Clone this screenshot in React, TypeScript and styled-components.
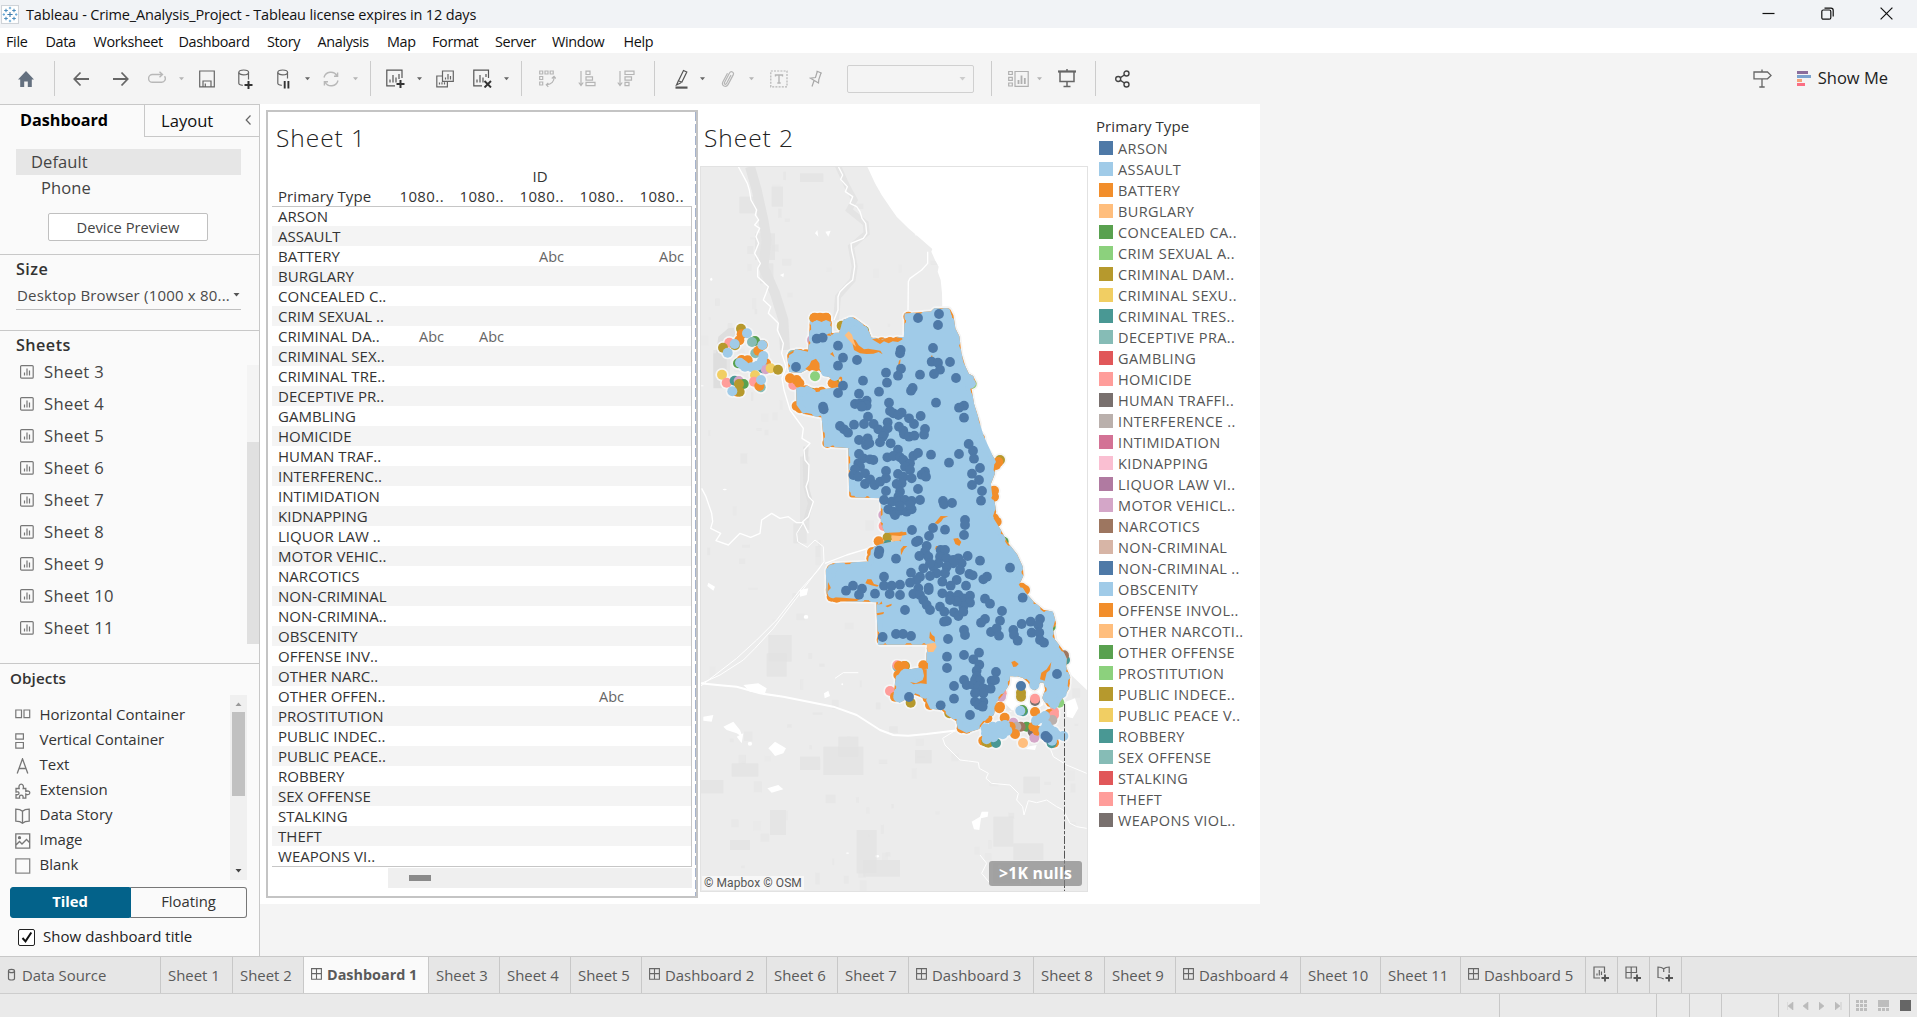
import React from 'react';
import styled, { createGlobalStyle } from 'styled-components';

const Global = createGlobalStyle`
  * { box-sizing: border-box; }
  body { margin: 0; overflow: hidden; font-family: "Open Sans", "Noto Sans", sans-serif; color: #333; }
  svg { display: block; flex: none; }
`;

/* ---------- window frame ---------- */
const Window = styled.div`
  width: 1917px; height: 1017px; display: flex; flex-direction: column; background: #f4f4f4;
`;
const TitleBar = styled.header`
  height: 28px; flex: none; display: flex; align-items: center; background: #f1f3f6; padding-left: 1px;
`;
const TitleText = styled.span`
  margin-left: 7px; font-size: 14.5px; letter-spacing: -0.16px; color: #111; white-space: pre; flex: 1; line-height: 27px;
`;
const WindowButtons = styled.div`
  display: flex; gap: 46px; align-items: center; margin-right: 24px; margin-bottom: 2px;
`;
const MenuBar = styled.nav`
  height: 25px; flex: none; display: flex; background: #fff; padding-left: 6px;
`;
const MenuItem = styled.span<{ $w: number }>`
  width: ${p => p.$w}px; font-size: 14.4px; letter-spacing: -0.34px; line-height: 27px; color: #111; white-space: nowrap;
`;
const Toolbar = styled.div`
  height: 51px; flex: none; display: flex; align-items: center; background: #f4f4f4;
`;
const Slot = styled.span<{ $gap: number; $w: number }>`
  margin-left: ${p => p.$gap}px; width: ${p => p.$w}px; height: 22px; display: flex; align-items: center; justify-content: center; flex: none;
`;
const Divider = styled.span<{ $gap: number }>`
  margin-left: ${p => p.$gap}px; width: 1px; height: 35px; background: #ccc; flex: none;
`;
const Select = styled.span`
  margin-left: 25px; width: 127px; height: 28px; border: 1px solid #d0d0d0; border-radius: 2px; flex: none;
  display: flex; align-items: center; justify-content: flex-end; padding-right: 7px;
`;
const ShowMe = styled.span`
  display: flex; align-items: center; gap: 6px; margin: 0 29px 0 25px; font-size: 16.5px; color: #222; white-space: nowrap; line-height: 20px; padding-bottom: 2px;
  svg { margin-top: 2px; }
`;
const Spacer = styled.span`flex: 1;`;

const Workspace = styled.main`
  height: 852px; flex: none; display: flex;
`;

/* ---------- side panel ---------- */
const Side = styled.aside`
  width: 260px; flex: none; display: flex; flex-direction: column; background: #fafafa;
  border-top: 1px solid #c8c8c8; border-right: 1px solid #c8c8c8;
`;
const SideTabs = styled.div`height: 32px; display: flex; flex: none;`;
const ActiveSideTab = styled.div`
  width: 144px; padding-left: 20px; font-weight: 700; font-size: 16.2px; line-height: 31px; color: #000;
`;
const SideTab = styled.div`
  flex: 1; display: flex; border-left: 1px solid #c8c8c8; border-bottom: 1px solid #c8c8c8;
  padding: 0 7px 0 16px; font-size: 16.6px; line-height: 31px; color: #111; justify-content: space-between;
  svg { margin-top: 9px; }
`;
const Devices = styled.section`
  height: 118px; flex: none; border-bottom: 1px solid #c8c8c8; display: flex; flex-direction: column; padding: 12px 0 0 16px;
`;
const Device = styled.div<{ $on?: boolean }>`
  width: 225px; height: 26px; line-height: 26px; font-size: 16.5px; color: #444; letter-spacing: 0.1px;
  padding-left: ${p => (p.$on ? 15 : 25)}px; background: ${p => (p.$on ? '#e6e6e6' : 'transparent')};
`;
const PreviewButton = styled.button`
  margin: 12px 0 0 32px; width: 160px; height: 28px; padding: 0; border: 1px solid #c0c0c0; border-radius: 2px; background: #fff;
  font: 400 14.7px/26px "Open Sans", sans-serif; color: #444;
`;
const SizeSection = styled.section`
  height: 76px; flex: none; border-bottom: 1px solid #c8c8c8; padding: 1px 18px 0 16px;
`;
const Heading = styled.h3`
  margin: 0; font-size: 16.2px; line-height: 26px; font-weight: 600; color: #333; letter-spacing: 0.45px;
`;
const SizePicker = styled.div`
  height: 28px; display: flex; align-items: center; justify-content: space-between; border-bottom: 1px solid #c0c0c0;
  font-size: 15px; color: #4a4a4a; white-space: nowrap; padding: 0 1px 2px; letter-spacing: 0.2px;
`;
const SheetsSection = styled.section`
  height: 333px; flex: none; border-bottom: 1px solid #c8c8c8; display: flex; flex-direction: column; padding: 1px 0 0 16px;
`;
const ListRow = styled.div`display: flex; flex: 1; justify-content: space-between;`;
const SheetList = styled.div`display: flex; flex-direction: column; margin-top: -3px;`;
const SheetItem = styled.div`
  height: 32px; display: flex; align-items: center; gap: 10px; padding-left: 4px; font-size: 16.6px; letter-spacing: 0.35px; color: #444;
  svg { margin-top: 1px; }
`;
const SheetScroll = styled.div`
  width: 12px; height: 279px; margin-top: 7px; padding-top: 77px; background: #f4f4f4;
  &::after { content: ""; display: block; height: 202px; background: #e0e0e0; }
`;
const ObjectsSection = styled.section`flex: 1; display: flex; flex-direction: column; padding: 1px 12px 0 10px;`;
const ObjectsHeading = styled.h3`margin: 0; font-size: 15.2px; line-height: 27px; font-weight: 600; color: #333; letter-spacing: 0.1px;`;
const ObjectList = styled.div`display: flex; flex-direction: column; padding-top: 6px;`;
const ObjectItem = styled.div`
  height: 25px; display: grid; grid-template-columns: 24.5px auto; align-items: center; padding-left: 5px;
  font-size: 15px; color: #333; white-space: nowrap; svg { margin-top: 4px; }
`;
const ObjectRow = styled.div`display: flex; justify-content: space-between; height: 187px; margin-top: 3px;`;
const ObjectScroll = styled.div`
  width: 17px; height: 185px; background: #f0f0f0; display: flex; flex-direction: column; align-items: center; padding: 7px 0;
`;
const ObjectThumb = styled.div`width: 13px; height: 84px; background: #c1c1c1; margin: 6px 0 73px; flex: none;`;
const Segmented = styled.div`display: flex; height: 31px; margin-top: 5px; flex: none;`;
const Segment = styled.div<{ $on?: boolean }>`
  width: ${p => (p.$on ? 120 : 117)}px; border: 1px solid ${p => (p.$on ? '#03628a' : '#777')}; border-left-color: #03628a;
  border-radius: ${p => (p.$on ? '3px 0 0 3px' : '0 3px 3px 0')}; background: ${p => (p.$on ? '#03628a' : '#fafafa')};
  color: ${p => (p.$on ? '#fff' : '#333')}; font-weight: ${p => (p.$on ? 700 : 400)}; font-size: 14.8px; line-height: 27px; text-align: center;
`;
const CheckRow = styled.label`display: flex; align-items: center; gap: 8px; margin: 8px 0 0 8px; font-size: 15px; color: #222; line-height: 20px; letter-spacing: 0.05px;`;
const CheckBox = styled.span`
  width: 17px; height: 17px; margin-top: 2px; border: 1.5px solid #222; border-radius: 2px; background: #fff; display: flex; align-items: center; justify-content: center;
`;

/* ---------- dashboard canvas ---------- */
const Canvas = styled.div`width: 1000px; height: 800px; background: #fff; display: flex; flex: none; padding: 6px 0 0 6px;`;
const SheetFrame = styled.section`
  width: 432px; height: 788px; flex: none; border: 2px solid #c4c4c4; padding: 0 3px 0 4px; display: flex; flex-direction: column;
  background: linear-gradient(#fff, #fff) 0 0 / 427px 100% no-repeat, repeating-linear-gradient(#a5b3cd 0 9px, #fff 9px 12px);
`;
const SheetTitle = styled.h2`
  margin: 0; font-weight: 300; font-size: 24.5px; letter-spacing: 0.95px; line-height: 36px; color: #222; white-space: nowrap;
`;
const FrameTitle = styled(SheetTitle)`padding: 8px 0 0 4px; height: 54px; flex: none;`;
const FieldName = styled.div`
  height: 20px; padding-left: 114px; width: 422px; text-align: center; font-size: 15px; line-height: 20px; color: #333; flex: none;
`;
const HeaderRow = styled.div`
  display: grid; grid-template-columns: 116px repeat(5, 60px); height: 20px; font-size: 15px; line-height: 20px; color: #333; flex: none; white-space: nowrap;
`;
const HeaderCell = styled.span<{ $first?: boolean }>`
  text-align: ${p => (p.$first ? 'left' : 'right')}; padding: ${p => (p.$first ? '0 0 0 6px' : '0 4px 0 0')}; letter-spacing: ${p => (p.$first ? 0.1 : 0.4)}px;
`;
const Table = styled.div`
  width: 420px; height: 661px; border: 1px solid #c6c6c6; border-left: 0; flex: none; overflow: hidden;
`;
const TableRow = styled.div<{ $band: boolean; $first: boolean }>`
  display: grid; grid-template-columns: 116px repeat(5, 60px); height: ${p => (p.$first ? 19 : 20)}px; line-height: ${p => (p.$first ? 19 : 21)}px;
  background: ${p => (p.$band ? '#f4f4f4' : '#fff')}; font-size: 15px; white-space: nowrap;
`;
const RowLabel = styled.span`padding-left: 6px; color: #333; letter-spacing: 0.03px; overflow: hidden;`;
const Mark = styled.span`text-align: right; padding-right: 4px; color: #666; font-weight: 400; font-size: 14.5px;`;
const TableScroll = styled.div`
  margin: 1px 0 0 116px; width: 304px; height: 20px; background: #efefef; padding: 7px 0 0 21px; flex: none;
  &::after { content: ""; display: block; width: 22px; height: 6px; background: #8a8a8a; }
`;
const MapColumn = styled.section`width: 390px; margin-left: 2px; display: flex; flex-direction: column; flex: none;`;
const MapTitle = styled(SheetTitle)`padding: 10px 0 0 4px; height: 56px; flex: none;`;
const MapFrame = styled.div`position: relative; width: 388px; height: 726px; overflow: hidden;`;
const Credit = styled.div`
  position: absolute; left: 2px; bottom: 2px; background: rgba(250,250,250,.8); padding: 0 2px; height: 14px; line-height: 15px;
  font-family: Roboto, "Liberation Sans", sans-serif; font-size: 12px; letter-spacing: 0.08px; color: #555; white-space: nowrap;
`;
const NullBadge = styled.div`
  position: absolute; right: 6px; bottom: 6px; width: 93px; height: 25px; border-radius: 3px; background: rgba(128,128,128,.68); color: #fff;
  font-weight: 700; font-size: 15.8px; letter-spacing: 0.25px; line-height: 25px; text-align: center; white-space: nowrap;
`;
const Legend = styled.section`margin: 7px 0 0 6px; display: flex; flex-direction: column;`;
const LegendTitle = styled.div`font-size: 15px; line-height: 18px; height: 20px; color: #333; letter-spacing: 0.1px;`;
const LegendItem = styled.div`
  height: 21px; display: flex; align-items: center; gap: 5px; padding: 1px 0 0 3px; font-size: 14.5px; letter-spacing: 0.38px; color: #555; white-space: nowrap;
`;
const Swatch = styled.span<{ $c: string }>`width: 14px; height: 14px; background: ${p => p.$c}; flex: none; margin-bottom: 1px;`;

/* ---------- bottom bars ---------- */
const TabBar = styled.footer`height: 38px; flex: none; display: flex; background: #e6e6e6; border-top: 1px solid #c8c8c8; border-bottom: 1px solid #cdcdcd;`;
const Tab = styled.div<{ $w: number; $on?: boolean }>`
  width: ${p => p.$w}px; flex: none; border-right: 1px solid #c8c8c8; display: flex; align-items: center; gap: 5px; padding: 0 0 1px 7px;
  background: ${p => (p.$on ? '#fafafa' : 'transparent')}; font-weight: ${p => (p.$on ? 700 : 400)};
  font-size: ${p => (p.$on ? 14.4 : 14.9)}px; color: #5a5a5a; white-space: nowrap; line-height: 34px;
  svg { margin-bottom: 1px; }
`;
const StatusBar = styled.div`flex: 1; display: flex; justify-content: flex-end; background: #eaeaea;`;
const StatusCell = styled.div<{ $w: number; $gap?: number }>`
  width: ${p => p.$w}px; border-left: 1px solid #c8c8c8; display: flex; align-items: center; justify-content: center; gap: ${p => p.$gap ?? 0}px; flex: none;
`;

/* ---------- icons ---------- */
const Ico = ({ w, h = 18, c = '#555', sw = 1.2, children }: { w: number; h?: number; c?: string; sw?: number; children: React.ReactNode }) => (
  <svg width={w} height={h} viewBox={`0 0 ${w} ${h}`} fill="none" stroke={c} strokeWidth={sw}>{children}</svg>
);
const Caret = ({ c = '#666', w = 6, up = false }: { c?: string; w?: number; up?: boolean }) => (
  <svg width={w} height={4} viewBox="0 0 6 4"><path d={up ? 'M0 4h6L3 .4z' : 'M0 0h6L3 3.6z'} fill={c} /></svg>
);
const Logo = () => {
  const plus = (x: number, y: number, r: number, c: string) => <path key={`${x}-${y}`} d={`M${x - r} ${y}h${2 * r}M${x} ${y - r}v${2 * r}`} stroke={c} />;
  return (
    <Ico w={18} h={19} sw={1.1}>
      <rect x={0.5} y={0.5} width={17} height={18} fill="#fff" stroke="#cfd3d8" />
      {plus(9, 9.5, 2.6, '#3f7cac')}
      {[[5, 5.5], [13, 5.5], [5, 13.5], [13, 13.5]].map(p => plus(p[0], p[1], 1.8, '#4b8dbd'))}
      {[[9, 3], [9, 16], [2.8, 9.5], [15.2, 9.5]].map(p => plus(p[0], p[1], 1.2, '#6aa9d6'))}
    </Ico>
  );
};
const GridIcon = () => <Ico w={11} h={12} c="#666" sw={1.1}><path d="M.6 .6h9.8v10.6H.6zM5.5 .6v10.6M.6 5.6h9.8" /></Ico>;
const SheetIcon = () => <Ico w={14} h={14} c="#777"><rect x=".6" y=".6" width="12.6" height="12.6" rx="1" /><path d="M4.5 10.5v-3M7 10.5v-7M9.5 10.5v-5" /></Ico>;

const icons = {
  home: <Ico w={18} sw={0}><path d="M9 1 1 9.5h2.2V17h4v-5.5h3.6V17h4V9.5H17z" fill="#64707f" /></Ico>,
  back: <Ico w={17} sw={1.8} c="#666"><path d="M16 9H1.5M7.5 2.5 1.3 9l6.2 6.5" /></Ico>,
  fwd: <Ico w={17} sw={1.8} c="#666"><path d="M1 9h14.5M9.5 2.5 15.7 9l-6.2 6.5" /></Ico>,
  loop: <Ico w={18} c="#b8b8b8" sw={1.4}><path d="M14 4.5H4.5a3.7 3.7 0 0 0 0 7.8h9a3.7 3.7 0 0 0 3-6M11.5 1.7l3 2.8-3 2.8" /></Ico>,
  save: <Ico w={16} c="#666"><path d="M.7 1h14.6v15.8H.7zM4 16.5v-5.5h8v5.5M6.3 16.5v-3" /></Ico>,
  dbPlus: <Ico w={15} h={20} c="#666"><path d="M.8 3.5v10.8c0 1 1.5 1.8 4 2M10.5 3.5v7" /><ellipse cx="5.7" cy="3.4" rx="4.9" ry="2.4" /><path d="M10.5 12v8M6.5 16h8" stroke="#333" strokeWidth="2" /></Ico>,
  dbPause: <Ico w={13} h={20} c="#666"><path d="M.8 3.5v10.8c0 1 1.5 1.8 4 2M10.5 3.5v6" /><ellipse cx="5.7" cy="3.4" rx="4.9" ry="2.4" /><path d="M7.7 12v7.5M11.4 12v7.5" stroke="#333" strokeWidth="1.9" /></Ico>,
  refresh: <Ico w={18} c="#b8b8b8" sw={1.4}><path d="M2 7.5a7 7 0 0 1 13-1.5M16 10.5a7 7 0 0 1-13 1.5M12 6.2h3.6V2.6M6 11.8H2.4v3.6" /></Ico>,
  newSheet: <Ico w={19} h={19}><path d="M16 9V1.2H.8v15.6H9" /><path d="M4 13.5v-3M7 13.5V6M10 13.5V8.5M13 10V5" /><path d="M14.5 11v8M10.5 15h8" stroke="#333" strokeWidth="2" /></Ico>,
  dup: <Ico w={18} c="#666"><path d="M6.5 1h10.8v10.4H6.5zM6.5 6H.8v10.8h10.6V11.5" /><path d="M9.5 9.5v-2M12 9.5V4M14.5 9.5V6M3.5 14.5v-2M6 14.5v-2.2M8.5 14.5v-2.2" /></Ico>,
  clear: <Ico w={19} h={19}><path d="M15.5 9V1.2H.8v15.6H9" /><path d="M4 13.5v-3M7 13.5V6M10 13.5V8.5M13 8V5" /><path d="m11.5 12 6.5 6.5m0-6.5-6.5 6.5" stroke="#333" strokeWidth="1.9" /></Ico>,
  swap: <Ico w={17} c="#b5b5b5"><path d="M.7 1h3v3h-3zM6 1h3v3H6zM11.2 1h3v3h-3zM.7 6.5h3v3h-3zM.7 12h3v3h-3zM15 6.5c.4 5-2.5 8-7.5 8.3M12.8 8.5 15 6.3l1.8 2.2M9.3 12.8l-2 2 2 2" /></Ico>,
  asc: <Ico w={18} c="#b5b5b5"><path d="M3 1v14M.8 12.5 3 15.5l2.2-3M8 1.2h4v3.3H8zM8 6.8h6.5v3.3H8zM8 12.4h9v3.3H8z" /></Ico>,
  desc: <Ico w={18} c="#b5b5b5"><path d="M3 1v14M.8 12.5 3 15.5l2.2-3M8 1.2h9v3.3H8zM8 6.8h6.5v3.3H8zM8 12.4h4v3.3H8z" /></Ico>,
  pen: <Ico w={13} h={20} c="#555"><path d="M8.5 1.5 11.8 3 6.8 13.2 3.5 11.8zM3.3 12 1.5 16l4.5-2.2" /><path d="M.5 18.6h12" strokeWidth="2.2" /></Ico>,
  clip: <Ico w={14} c="#b5b5b5"><path d="M10 5 5.5 13.5c-.8 1.5-2.8.5-2-1L8.5 3c1.5-2.6 5-.8 3.7 1.9L7 14.6c-2 3.6-7 1-5.2-2.5L6.5 3.2" /></Ico>,
  text: <Ico w={18} c="#b5b5b5"><path d="M.8 1h16.2v15.8H.8z" strokeDasharray="2 1.2" /><path d="M5.5 6.5V5h7v1.5M9 5v8M7.3 13h3.4" strokeWidth="1.4" /></Ico>,
  pin: <Ico w={14} c="#a8a8a8"><path d="M7.5 1 12.800 3.200M8.300 1.500 6.500 7.500 1.500 8.200l8 4.800L9.800 9.500 12 3M5 10.800 3 16.500" /></Ico>,
  fit: <Ico w={21} c="#b0b0b0"><path d="M.7 1.5h3.6v3H.7zM.7 7.3h3.6v3H.7zM.7 13h3.6v3H.7zM7 1.5h13.2v14.8H7z" /><path d="M10.5 14V10M13.5 14V5.5M16.8 14V8" strokeWidth="1.8" /></Ico>,
  present: <Ico w={18} h={19} c="#666"><path d="M0 2.5h18" strokeWidth="2.2" /><path d="M2 3v9.5h14V3M9 12.5V17M5.5 17.6h7M9 0v2" strokeWidth="1.5" /></Ico>,
  share: <Ico w={15} c="#444" sw={1.4}><circle cx="3.2" cy="9" r="2.5" /><circle cx="11.5" cy="3.5" r="2.5" /><circle cx="11.5" cy="14.5" r="2.5" /><path d="m5.4 7.6 4-2.6M5.4 10.4l4 2.6" /></Ico>,
  sign: <Ico w={19} h={19} c="#666" sw={1.3}><path d="M1 3h13.5l3.5 3.4-3.5 3.4H1zM9 .5V3M9 10v8M6.3 18h5.4" /></Ico>,
};

const objectIcons: Record<string, React.ReactNode> = {
  'Horizontal Container': <Ico w={16} h={16} c="#777"><path d="M.8 2h5.7v7.6H.8zM9 2h5.7v7.6H9z" /></Ico>,
  'Vertical Container': <Ico w={16} h={16} c="#777"><path d="M.8 .8h7.6v5.4H.8zM.8 9.5h7.6v5.6H.8z" /></Ico>,
  Text: <Ico w={16} h={16} c="#777" sw={1.3}><path d="M2.2 15.5 7.5 .8l5.3 14.7M4 10.5h7" /></Ico>,
  Extension: <Ico w={16} h={16} c="#777" sw={1.3}><path d="M1 5.5h3.2c-.8-2 .2-4.300 2-4.300s2.800 2.300 2 4.300h2.600v3c1.800-1 4-.5 4 1.300s-2.200 2.300-4 1.300v4H8c.5-1.800-.3-3-1.700-3s-2.200 1.200-1.700 3H1v-3.500c1.800.5 3-.2 3-1.400S2.800 8.500 1 9z" /></Ico>,
  'Data Story': <Ico w={16} h={16} c="#777" sw={1.3}><path d="M.8 1.200c3 0 5 .4 6.700 2 1.700-1.600 3.700-2 6.700-2v12c-3 0-5 .4-6.700 2-1.700-1.600-3.700-2-6.700-2zM7.500 3.200v12" /></Ico>,
  Image: <Ico w={16} h={16} c="#777" sw={1.3}><path d="M.8 .8h13.9v14.4H.8zM1 12l3.500-3.500L7 11l4.500-4.500 3 3" /><circle cx="4.5" cy="4.7" r="1" fill="#777" /></Ico>,
  Blank: <Ico w={16} h={16} c="#888" sw={1.3}><path d="M.8 .8h13.9v14.4H.8z" /></Ico>,
};

/* ---------- data ---------- */
const palette = {
  navy: '#4e79a7', sky: '#a0cbe8', orange: '#f28e2b', peach: '#ffbe7d', green: '#59a14f', lime: '#8cd17d', olive: '#b6992d', yellow: '#f1ce63',
  teal: '#499894', aqua: '#86bcb6', red: '#e15759', pink: '#ff9d9a', umber: '#79706e', sand: '#bab0ac', rose: '#d37295', blush: '#fabfd2',
  grape: '#b07aa1', plum: '#d4a6c8', brown: '#9d7660', tan: '#d7b5a6',
};
type Hue = keyof typeof palette;
const hues = Object.keys(palette) as Hue[];

const rows = ['ARSON', 'ASSAULT', 'BATTERY', 'BURGLARY', 'CONCEALED C..', 'CRIM SEXUAL ..', 'CRIMINAL DA..', 'CRIMINAL SEX..', 'CRIMINAL TRE..', 'DECEPTIVE PR..', 'GAMBLING', 'HOMICIDE', 'HUMAN TRAF..', 'INTERFERENC..', 'INTIMIDATION', 'KIDNAPPING', 'LIQUOR LAW ..', 'MOTOR VEHIC..', 'NARCOTICS', 'NON-CRIMINAL', 'NON-CRIMINA..', 'OBSCENITY', 'OFFENSE INV..', 'OTHER NARC..', 'OTHER OFFEN..', 'PROSTITUTION', 'PUBLIC INDEC..', 'PUBLIC PEACE..', 'ROBBERY', 'SEX OFFENSE', 'STALKING', 'THEFT', 'WEAPONS VI..'];
const legend = ['ARSON', 'ASSAULT', 'BATTERY', 'BURGLARY', 'CONCEALED CA..', 'CRIM SEXUAL A..', 'CRIMINAL DAM..', 'CRIMINAL SEXU..', 'CRIMINAL TRES..', 'DECEPTIVE PRA..', 'GAMBLING', 'HOMICIDE', 'HUMAN TRAFFI..', 'INTERFERENCE ..', 'INTIMIDATION', 'KIDNAPPING', 'LIQUOR LAW VI..', 'MOTOR VEHICL..', 'NARCOTICS', 'NON-CRIMINAL', 'NON-CRIMINAL ..', 'OBSCENITY', 'OFFENSE INVOL..', 'OTHER NARCOTI..', 'OTHER OFFENSE', 'PROSTITUTION', 'PUBLIC INDECE..', 'PUBLIC PEACE V..', 'ROBBERY', 'SEX OFFENSE', 'STALKING', 'THEFT', 'WEAPONS VIOL..'];
const marks: Record<number, number[]> = { 2: [2, 4], 6: [0, 1], 24: [3] };

const parse = (s: string) => s.trim().split(/\s+/).map(p => p.split(',').map(Number));

const arson = parse(`654,54 717,42 714,75 699,144 602,150 600,160 414,137 429,173 414,197 350,116 368,113 288,201 471,180 603,206 594,227 558,218 561,248 489,242 429,257 414,279
477,281 537,275 567,308 660,224 695,185 714,188 720,209 702,222 750,186 768,234 638,264 633,272 708,308 792,317 777,323 792,353 369,320 371,328 465,312 480,310 500,302 500,317 485,320
504,350 492,372 462,374 420,378 432,388 444,398 521,372 535,388 563,367 563,385 552,402 548,410 570,333 580,340 605,338 595,345 627,355 642,372 662,348 597,380 610,392 612,403 627,410 643,407
675,387 672,404 477,420 503,415 498,435 508,430 540,427 572,430 594,449 477,462 490,475 510,478 520,480 475,490 562,472 580,468 600,472 610,480 630,490 640,468 654,459 693,464 615,500
480,500 465,508 460,525 475,530 495,520 495,552 510,538 524,555 540,545 558,513 558,535 594,522 610,530 630,510 635,535 605,550 590,552 675,515 665,524 678,530 747,488 777,462 806,432
819,452 822,476 840,504 816,521 837,540 816,555 846,573 843,602 558,573 600,575 595,590 552,600 575,605 595,605 615,600 635,603 660,600 654,567 565,628 580,635 585,645 600,632 620,635
635,628 630,615 600,618 729,603 732,613 756,609 795,660 795,675 792,705 699,684 687,708 735,689 636,690 648,726 655,722 538,752 536,762 588,776 680,738 675,755 658,768 685,770 722,750 735,750
720,770 740,775 760,780 775,775 803,768 785,790 780,810 760,790 740,800 715,790 700,800 690,790 670,805 735,820 710,820 690,828 660,830 633,818 650,840 630,848 840,782 930,803
808,822 818,826 861,830 850,838 770,840 798,857 727,845 752,857 686,863 686,870 655,865 640,882 660,885 670,900 727,880 552,830 552,857 575,857 600,854 569,882 600,885 525,881
459,857 438,872 486,866 477,884 615,930 750,888 775,885 790,895 810,887 810,908 790,920 770,905 750,900 680,915 690,930 720,920 733,935 762,937 775,948 790,935 732,965 741,963
855,896 870,911 906,933 900,962 855,957 843,968 873,996 890,985 897,1007 548,1011 588,1002 609,1002 633,1008 744,1017 792,990 795,1005 968,893 965,972 940,990 942,1005 953,1022 992,965 1020,957
1015,975 995,998 1018,998 1020,1020 1032,1028 837,1058 820,1078 792,1065 741,1070 741,1104 838,1094 830,1112 888,1116 830,1130 792,1140 825,1140 840,1142 875,1142 885,1140 800,1155
820,1155 835,1160 850,1165 872,1166 850,1180 825,1180 825,1205 850,1205 835,1215 848,1220 762,1158 762,1196 722,1216 810,1245 627,1191 1071,1122`);

const city = `M622,48 L697,42 706,33 744,33 752,48 758,88 770,112 776,162 788,202 800,227 813,234 820,250 806,265 814,315 823,342 832,372 832,396 846,412 848,440 866,464 880,487 876,520 864,550 868,585 876,610 880,635 872,657 894,692 916,732 944,767 960,802 962,825 950,850 970,882 996,912 1028,938 1052,942 1057,960 1050,985 1057,1022 1080,1052 1092,1078 1090,1102 1102,1132 1099,1163 1080,1192 1062,1218 1048,1212 1036,1193 1044,1170 1038,1140 1015,1140 1003,1162 989,1140 972,1126 950,1120 922,1120 920,1150 901,1180 880,1205 874,1240 855,1250 832,1280 800,1290 781,1280 776,1258 748,1240 729,1222 696,1218 682,1190 642,1175 600,1198 589,1186 596,1130 606,1114 632,1116 655,1112 687,1116 688,1062 696,1026 542,1026 537,898 404,894 388,880 386,812 400,798 512,793 516,752 545,740 604,728 618,692 560,690 551,668 551,586 456,584 453,436 380,432 373,346 314,334 298,312 297,270 318,264 345,280 430,268 430,218 402,228 375,218 345,185 300,210 275,208 270,168 290,156 332,166 338,68 386,68 388,108 424,106 436,66 458,60 496,88 508,120 540,126 620,118 Z`;

/* dots below the main area, drawn first */
const under: [Hue, string][] = [
  ['olive', '343,55 378,55 425,77 900,480 563,712 615,1098 632,1208 748,1240 497,155 405,250 335,278 865,1328 963,1178'],
  ['aqua', '592,1100 278,165 480,90 345,100'],
  ['pink', '570,1173 592,1096 280,255 551,678 1062,1235 905,1180 826,390 950,835'],
  ['plum', '550,645 903,1190 336,120'],
  ['lime', '345,229 815,252 1078,1208'],
  ['green', '492,92 1052,980 911,725'],
  ['teal', '563,735 1095,1080 888,1329'],
  ['brown', '1092,1066'],
  ['orange', '344,53 360,53 378,53 380,70 344,75 318,163 300,162 290,240 270,235 298,250 300,325 290,318 398,250 412,262 350,278 365,275 413,225 400,215 895,486 888,495 882,572 882,590 882,655 890,665 965,863 975,870 536,724 516,757 514,775 395,808 395,890 410,893 597,1098 612,1098 595,1125 670,1096 670,1110 585,1190 690,1215 683,1195 525,128 545,127 570,126 592,125 625,50 455,85 900,1220 1094,1150 1053,970 785,1285 800,1286 850,1322 862,1255 545,1020 545,750 382,429'],
  ['peach', '590,712 695,1045 392,870 915,1140'],
];
/* coloured patches left uncovered on top of the area */
const patches: [Hue, string][] = [
  ['orange', 'M330,62 L332,46 342,40 386,40 392,48 392,66 378,60 365,66 350,60 338,68z'],
  ['orange', 'M454,116 L466,120 476,136 492,148 505,146 528,150 541,152 548,163 536,156 520,161 500,162 480,160 462,150z'],
  ['peach', 'M434,106 L446,94 456,104 462,124 468,140 458,132 444,118z'],
  ['orange', 'M388,100 L394,108 378,106z M334,182 L348,176 358,190 360,210 350,214 336,210 328,214 316,206 328,196z'],
  ['orange', 'M390,162 L398,156 404,172 396,166z'],
  ['orange', 'M516,118 L530,116 545,120 560,114 606,114 608,118 594,126 578,124 566,130 552,124 540,132z'],
  ['orange', 'M594,196 L597,182 602,178 600,192z M690,176 L696,164 698,172z'],
  ['orange', 'M704,670 L714,658 722,648 745,649 730,655 724,664 714,672z'],
  ['orange', 'M760,716 L774,714 784,726 778,738 766,732z M704,750 L708,738 720,738 712,742z'],
  ['orange', 'M603,766 L602,748 610,738 622,738 612,748z M496,850 L502,838 514,838 522,852 536,856 532,860 514,856z'],
  ['orange', 'M528,914 L538,912 545,904 547,912z M530,940 L552,936 550,942 532,946z M556,918 L575,911 574,917 562,922z'],
  ['orange', 'M688,1014 L690,994 696,1004 704,1010 705,1026 694,1020z'],
  ['peach', 'M680,1032 L705,1028 710,1040 700,1056 684,1056z M574,706 L606,702 606,712 598,722 576,724z'],
  ['orange', 'M566,698 L618,696 620,704 600,708 574,706z'],
  ['orange', 'M630,1146 L648,1150 668,1140 672,1128 668,1108 680,1108 680,1152 662,1150 640,1153z'],
  ['orange', 'M1054,1086 L1050,1110 1040,1118 1034,1142 1020,1138 1024,1118 1040,1108z'],
  ['orange', 'M384,846 L392,862 390,884 382,884z M396,902 L402,892 440,894 480,898 470,903 400,905z'],
  ['orange', 'M934,1086 L944,1082 956,1092 948,1100 940,1102z'],
];
const over: [Hue, string][] = [
  ['sky', '945,1115 812,250 655,1125 398,880 395,820 397,808 452,66 440,75 490,92 404,228 378,215 374,205 348,78 376,78 305,275 1085,1180 1063,1210 1050,1190 1003,1155 595,1192'],
  ['olive', '123,86'], ['orange', '125,103 118,121'], ['sky', '141,100'], ['pink', '88,128'], ['olive', '69,143 105,136'], ['sky', '83,158'], ['sky', '104,132'], ['green', '165,123'], ['aqua', '156,126 166,160'],
  ['orange', '175,152 188,135'], ['sky', '187,135'], ['green', '114,190'], ['orange', '125,180 143,181 198,190'], ['teal', '188,205'], ['plum', '197,208'], ['yellow', '212,205'], ['sky', '120,188 135,200 128,194 155,202 172,197 186,183 190,168'],
  ['olive', '234,209'], ['yellow', '66,224 165,226'], ['pink', '80,248'], ['teal', '104,242'], ['plum', '116,243'], ['green', '131,252'], ['pink', '162,245'], ['aqua', '182,262'], ['orange', '178,258'], ['sky', '183,240'], ['orange', '112,275'], ['olive', '117,252 119,275'], ['sky', '97,274'],
  ['olive', '963,1190'], ['navy', '963,1158'], ['umber', '1005,1203'], ['pink', '1005,1196'], ['teal', '969,1234'], ['green', '967,1230'], ['sky', '961,1232'],
  ['orange', '898,1225 914,1253'], ['plum', '940,1268'], ['green', '980,1280'], ['brown', '962,1280'], ['sand', '949,1280'], ['umber', '998,1295'], ['plum', '1003,1313'], ['orange', '945,1302 1005,1236 1048,1242 1000,1280 1012,1292 1062,1328 932,1280'],
  ['pink', '1062,1245'], ['sand', '1057,1260'], ['peach', '969,1329'], ['olive', '858,1325'], ['teal', '1055,1330'],
  ['sky', '857,1285 858,1300 860,1318 878,1280 880,1300 898,1278 900,1300 915,1275 922,1292 908,1303 880,1312 1022,1255 1035,1248 1008,1262 1040,1275 1050,1288 1030,1290 1062,1295 1032,1305 1045,1312 1070,1305 1056,1322 1090,1308'],
  ['navy', '1037,1308 1043,1314'],
];

const dots = (hue: Hue, list: string, key: string) => parse(list).map(([x, y], i) => <circle key={`${key}-${i}`} cx={x} cy={y} r={15} fill={palette[hue]} />);

/* low-contrast land-use blocks, from a small seeded generator */
const landUse = (() => {
  let s = 17;
  const r = () => (s = (s * 16807) % 2147483647) / 2147483647;
  return Array.from({ length: 230 }, () => ({ x: r() * 1150, y: -400 + r() * 2150, w: 6 + r() * 24, h: 6 + r() * 28, o: 0.25 + r() * 0.5, white: r() > 0.88 }));
})();
const blocks = parse('118,-310,48,50 300,-380,70,26 215,-340,34,60 165,-200,60,80 180,-110,40,60 300,470,28,220 205,1005,70,80 200,1060,60,70 370,1340,120,85 415,1310,60,60 0,1440,70,40 210,1530,48,75 470,1590,60,130 490,1680,110,50 880,1550,60,90 940,1630,90,50 880,1690,80,60 970,1430,50,50 95,1390,80,40 40,150,50,80 280,670,40,60 645,1350,50,40 90,1620,60,30 300,1370,60,40');

const land = 'M0,-402 H501 L525,-350 545,-315 569,-280 590,-250 625,-215 660,-185 697,-153 694,-145 706,-118 716,-100 713,-85 722,-60 726,-20 727,30 740,100 790,260 850,480 860,620 940,800 1000,930 1060,950 1072,1020 1090,1050 1108,1120 1163,1172 V1776 H0Z';

const CrimeMap = () => (
  <svg width={388} height={726} viewBox="0 -402 1164 2178">
    <rect x={0} y={-402} width={1164} height={2178} fill="#fff" />
    <clipPath id="land"><path d={land} /></clipPath>
    <path d={land} fill="#ececec" />
    <g clipPath="url(#land)">
      {landUse.map((b, i) => b.white
        ? <ellipse key={i} cx={b.x} cy={b.y} rx={b.w / 4} ry={b.h / 5} fill="#fff" />
        : <rect key={i} x={b.x} y={b.y} width={b.w} height={b.h} fill="#e5e5e5" opacity={b.o} />)}
      {blocks.map(([x, y, w, h], i) => <rect key={i} x={x} y={y} width={w} height={h} fill="#e3e3e3" opacity={0.7} />)}
      <path d="M150,-400 L170,-330 190,-240 200,-180 190,-100 225,-20 250,60 255,150" fill="none" stroke="#e2e2e2" strokeWidth={30} />
      <path d="M55,110 L85,85 130,80 110,120 80,160 45,180z M40,160h40v105H40z" fill="#dedede" />
      <path d="M414,-402 L442,-340 464,-300 447,-270 497,-230 500,-200 453,-160 464,-100 458,-60 414,-10 408,60" fill="none" stroke="#e4e4e4" strokeWidth={18} />
      <path d="M318,440 L316,480 318,560 332,610 318,660" fill="none" stroke="#e0e0e0" strokeWidth={16} />
    </g>
    <g fill="none" stroke="#fff" strokeLinejoin="round">
      <path strokeWidth={4} d="M114,-402 L134,-365 142,-350 148,-330 153,-300 170,-270 166,-255 176,-240 164,-225 179,-215 172,-200 168,-190 176,-170 164,-140 181,-110 173,-95 173,-70 205,-40 198,-20 190,0 212,20 205,40 235,70 232,90 250,130 245,160 258,200 246,235 252,270 270,330 310,385 306,415 330,430 312,450 315,480 327,495 325,540 318,560 326,590 340,605 325,650 308,665 325,700" />
      <path strokeWidth={3} d="M310,668 L290,700 293,725 322,742 345,720 370,740 372,785 300,880 220,985 165,1045 130,1080 60,1125 0,1152 M372,785 L355,810 300,870 230,960 170,1020 110,1075 0,1160" />
      <path strokeWidth={4} d="M414,-402 L428,-375 422,-362 442,-340 436,-325 458,-310 450,-290 470,-280 480,-265 486,-245 497,-230 500,-200 490,-185 453,-170 455,-150 462,-120 464,-100 458,-60 440,-45 420,-25 414,-10 414,30 402,60" />
      <path strokeWidth={4} d="M683,-145 L683,-110 665,-90 630,-65 625,-55 624,35" />
      <path strokeWidth={6} d="M0,1150 L60,1156 110,1160 180,1180 250,1190 400,1220 470,1245 540,1290 580,1305 625,1307 680,1302 780,1290" />
      <path strokeWidth={4} d="M375,790 L440,765 505,745" />
      <path strokeWidth={3} d="M765,1292 L728,1315 735,1335 780,1380 805,1383 835,1387 838,1405 865,1420 858,1435 875,1450 930,1455 955,1480 950,1500 968,1520 972,1545 985,1502 1010,1508 1040,1500 1070,1520 1090,1530 1110,1570 1130,1580 1160,1585 M840,1665 L860,1690 845,1720 870,1750" />
      <path strokeWidth={4} d="M5,565 L18,590 35,640 38,665 32,685 62,700 48,722 85,735 120,700 152,712 180,700 185,660 215,640 240,655 265,650 290,668 310,668" />
      <path strokeWidth={3} d="M1045,1330 L1060,1370 1100,1395 1160,1420 M405,1135 L430,1118 475,1118" />
    </g>
    <g fill="#fff">
      <path d="M25,848 L45,860 40,872 22,858z M300,870 L325,865 320,885 300,890z M130,1155 L175,1150 200,1165 195,1180 150,1175z M372,1180 L385,1172 390,1188 374,1195z" />
      <path d="M205,1345 L225,1325 258,1345 250,1360 225,1368 215,1355z M70,1280 L100,1265 120,1290 128,1312 110,1300 80,1290z M10,1250 L40,1245 35,1265 10,1262z M110,1310 L130,1300 125,1330z" />
      <path d="M815,1565 L840,1550 845,1535 865,1535 863,1550 843,1555 838,1590 822,1588z M202,1465 L235,1455 250,1468 215,1478z M240,-75 L252,-80 250,-68z M345,-200 L352,-210 355,-190z M376,-205 L392,-208 385,-190z" />
      <path d="M925,1135 L990,1130 1030,1150 1030,1215 990,1240 935,1230 905,1200z M1098,1205 L1125,1195 1135,1225 1118,1255 1100,1250z" />
      <path d="M980,1340 L1010,1335 1005,1350 960,1345z" />
    </g>
    <g fill="none" stroke="#f5f5f5" strokeWidth={28} strokeLinejoin="round">
      <path d={city} />
    </g>
    <g fill="#f5f5f5">
      {[...under, ...over].flatMap(([, l]) => parse(l)).map(([x, y], i) => <circle key={i} cx={x} cy={y} r={20} />)}
    </g>
    {under.map(([h, l], i) => <g key={i}>{dots(h, l, 'u')}</g>)}
    <path d={city} fill={palette.orange} stroke={palette.orange} strokeWidth={17} strokeLinejoin="round" />
    <path d={city} fill={palette.sky} stroke={palette.sky} strokeWidth={7} strokeLinejoin="round" />
    <path d={city} fill="none" stroke={palette.sky} strokeWidth={17} strokeLinecap="round" strokeDasharray="20 30 46 19 8 34 70 22" />
    <path d="M697,42 L706,33 744,33 758,88 788,202 823,342 846,412 880,487" fill="none" stroke={palette.sky} strokeWidth={13} strokeLinejoin="round" />
    {patches.map(([h, d], i) => <path key={i} d={d} fill={palette[h]} />)}
    {over.map(([h, l], i) => <g key={i}>{dots(h, l, 'o')}</g>)}
    {arson.map(([x, y], i) => <circle key={i} cx={x} cy={y} r={14.7} fill={palette.navy} />)}
    <path d="M1093.5,1212 V1776" stroke="#555" strokeWidth={3} strokeDasharray="24 5 10 5" />
    <rect x={1.5} y={-400.5} width={1161} height={2175} fill="none" stroke="#e2e2e2" strokeWidth={3} />
  </svg>
);

const menus: [string, number][] = [['File', 39.5], ['Data', 48], ['Worksheet', 85], ['Dashboard', 88.5], ['Story', 50.5], ['Analysis', 69.5], ['Map', 45], ['Format', 63], ['Server', 57], ['Window', 71.5], ['Help', 40]];
const tabs: [string, number, boolean?][] = [['Sheet 1', 72], ['Sheet 2', 71], ['Dashboard 1', 125, true], ['Sheet 3', 71], ['Sheet 4', 71], ['Sheet 5', 71], ['Dashboard 2', 125], ['Sheet 6', 71], ['Sheet 7', 71], ['Dashboard 3', 125], ['Sheet 8', 71], ['Sheet 9', 71], ['Dashboard 4', 125], ['Sheet 10', 80], ['Sheet 11', 80], ['Dashboard 5', 125]];

const CaretSlot = ({ gap, dim }: { gap: number; dim?: boolean }) => <Slot $gap={gap} $w={7}><Caret c={dim ? '#b5b5b5' : '#666'} w={5} /></Slot>;

export default function App() {
  return (
    <Window>
      <Global />
      <TitleBar>
        <Logo />
        <TitleText>Tableau - Crime_Analysis_Project - Tableau license expires in 12 days</TitleText>
        <WindowButtons>
          <Ico w={13} h={13} c="#111"><path d="M.5 6.5h12" /></Ico>
          <Ico w={13} h={13} c="#111"><rect x=".8" y="3" width="9" height="9.2" rx="1.5" /><path d="M3.5 1.2h6.5a2.2 2.2 0 0 1 2.2 2.2V9.5" /></Ico>
          <Ico w={13} h={13} c="#111"><path d="m.6.6 11.8 11.8m0-11.8L.6 12.4" /></Ico>
        </WindowButtons>
      </TitleBar>
      <MenuBar>{menus.map(([m, w]) => <MenuItem key={m} $w={w}>{m}</MenuItem>)}</MenuBar>
      <Toolbar>
        <Slot $gap={17} $w={18}>{icons.home}</Slot>
        <Divider $gap={19} />
        <Slot $gap={18} $w={16}>{icons.back}</Slot>
        <Slot $gap={23} $w={16}>{icons.fwd}</Slot>
        <Slot $gap={20} $w={18}>{icons.loop}</Slot>
        <CaretSlot gap={12} dim />
        <Slot $gap={14} $w={16}>{icons.save}</Slot>
        <Slot $gap={23} $w={15}>{icons.dbPlus}</Slot>
        <Slot $gap={24} $w={13}>{icons.dbPause}</Slot>
        <CaretSlot gap={14} />
        <Slot $gap={11} $w={17}>{icons.refresh}</Slot>
        <CaretSlot gap={13} dim />
        <Divider $gap={11} />
        <Slot $gap={15} $w={19}>{icons.newSheet}</Slot>
        <CaretSlot gap={11} />
        <Slot $gap={13} $w={18}>{icons.dup}</Slot>
        <Slot $gap={19} $w={19}>{icons.clear}</Slot>
        <CaretSlot gap={11} />
        <Divider $gap={11} />
        <Slot $gap={17} $w={17}>{icons.swap}</Slot>
        <Slot $gap={22} $w={18}>{icons.asc}</Slot>
        <Slot $gap={21} $w={18}>{icons.desc}</Slot>
        <Divider $gap={19} />
        <Slot $gap={20} $w={13}>{icons.pen}</Slot>
        <CaretSlot gap={11} />
        <Slot $gap={15} $w={13}>{icons.clip}</Slot>
        <CaretSlot gap={14} dim />
        <Slot $gap={15} $w={18}>{icons.text}</Slot>
        <Slot $gap={21} $w={13}>{icons.pin}</Slot>
        <Select><Caret c="#ccc" w={7} /></Select>
        <Divider $gap={17} />
        <Slot $gap={16} $w={21}>{icons.fit}</Slot>
        <CaretSlot gap={7} dim />
        <Slot $gap={15} $w={18}>{icons.present}</Slot>
        <Divider $gap={19} />
        <Slot $gap={19} $w={15}>{icons.share}</Slot>
        <Spacer />
        {icons.sign}
        <ShowMe>
          <svg width={15} height={15}><path d="M0 0h11v3H0z" fill="#8a6d9b" /><path d="M0 4h14v3H0z" fill="#7ba3cf" /><path d="M0 8h5v3H0z" fill="#f5a27a" /><path d="M0 12h8v3H0z" fill="#fb6e83" /></svg>
          Show Me
        </ShowMe>
      </Toolbar>

      <Workspace>
        <Side>
          <SideTabs>
            <ActiveSideTab>Dashboard</ActiveSideTab>
            <SideTab>Layout<Ico w={7} h={12} c="#666"><path d="M5.5 1.5 1.2 6l4.3 4.5" /></Ico></SideTab>
          </SideTabs>
          <Devices>
            <Device $on>Default</Device>
            <Device>Phone</Device>
            <PreviewButton>Device Preview</PreviewButton>
          </Devices>
          <SizeSection>
            <Heading>Size</Heading>
            <SizePicker>Desktop Browser (1000 x 80...<Caret w={7} c="#555" /></SizePicker>
          </SizeSection>
          <SheetsSection>
            <Heading>Sheets</Heading>
            <ListRow>
              <SheetList>
                {[3, 4, 5, 6, 7, 8, 9, 10, 11].map(n => <SheetItem key={n}><SheetIcon />Sheet {n}</SheetItem>)}
              </SheetList>
              <SheetScroll />
            </ListRow>
          </SheetsSection>
          <ObjectsSection>
            <ObjectsHeading>Objects</ObjectsHeading>
            <ObjectRow>
              <ObjectList>{Object.entries(objectIcons).map(([n, ic]) => <ObjectItem key={n}>{ic}{n}</ObjectItem>)}</ObjectList>
              <ObjectScroll><Caret up w={7} c="#999" /><ObjectThumb /><Caret w={7} c="#444" /></ObjectScroll>
            </ObjectRow>
            <Segmented><Segment $on>Tiled</Segment><Segment>Floating</Segment></Segmented>
            <CheckRow><CheckBox><Ico w={12} h={12} c="#111" sw={2}><path d="m1.5 7 3 3.3L10.3 1.5" /></Ico></CheckBox>Show dashboard title</CheckRow>
          </ObjectsSection>
        </Side>

        <Canvas>
          <SheetFrame>
            <FrameTitle>Sheet 1</FrameTitle>
            <FieldName>ID</FieldName>
            <HeaderRow>
              <HeaderCell $first>Primary Type</HeaderCell>
              {[0, 1, 2, 3, 4].map(i => <HeaderCell key={i}>1080..</HeaderCell>)}
            </HeaderRow>
            <Table>
              {rows.map((r, i) => (
                <TableRow key={r} $band={i % 2 === 1} $first={i === 0}>
                  <RowLabel>{r}</RowLabel>
                  {[0, 1, 2, 3, 4].map(c => <Mark key={c}>{marks[i]?.includes(c) ? 'Abc' : ''}</Mark>)}
                </TableRow>
              ))}
            </Table>
            <TableScroll />
          </SheetFrame>
          <MapColumn>
            <MapTitle>Sheet 2</MapTitle>
            <MapFrame>
              <CrimeMap />
              <Credit>© Mapbox © OSM</Credit>
              <NullBadge>&gt;1K nulls</NullBadge>
            </MapFrame>
          </MapColumn>
          <Legend>
            <LegendTitle>Primary Type</LegendTitle>
            {legend.map((l, i) => <LegendItem key={l}><Swatch $c={palette[hues[i % 20]]} />{l}</LegendItem>)}
          </Legend>
        </Canvas>
      </Workspace>

      <TabBar>
        <Tab $w={161}><Ico w={10} h={13} c="#666"><path d="M1.5 3v7.5c0 2 6 2 6 0V3" /><ellipse cx="4.5" cy="3" rx="3" ry="1.7" /></Ico>Data Source</Tab>
        {tabs.map(([n, w, on]) => <Tab key={n} $w={w} $on={on}>{n.startsWith('D') && <GridIcon />}{n}</Tab>)}
        <Tab $w={32}><Ico w={16} h={16} c="#666"><path d="M11.5 7V1H1v11h6M4 9.5V7.5M6.3 9.5V4M8.5 9V5.5" /><path d="M12 8.5v7M8.5 12H16" strokeWidth="1.9" stroke="#555" /></Ico></Tab>
        <Tab $w={32}><Ico w={16} h={16} c="#666"><path d="M11.5 7V1H1v11h6M6.2 1v11M1 6.5h10.5" /><path d="M12 8.5v7M8.5 12H16" strokeWidth="1.9" stroke="#555" /></Ico></Tab>
        <Tab $w={32}><Ico w={16} h={16} c="#666"><path d="M12.2 7V1c-2.5 0-4 .5-5.5 1.8C5.2 1.5 3.5 1 1 1v10.5c2.5 0 4 .3 5.700 1.500M6.700 2.800V6" /><path d="M12 8.5v7M8.5 12H16" strokeWidth="1.9" stroke="#555" /></Ico></Tab>
      </TabBar>
      <StatusBar>
        <StatusCell $w={157} /><StatusCell $w={33} /><StatusCell $w={32} /><StatusCell $w={57} />
        <StatusCell $w={71} $gap={9}>
          {['M0 0v8M6 0v8L1 4z', 'M5 0v8L0 4z', 'M0 0v8l5-4z', 'M0 0v8l5-4zM6 0v8'].map(d => <svg key={d} width={7} height={8}><path d={d} fill="#bbb" stroke="#bbb" strokeWidth={0.6} /></svg>)}
        </StatusCell>
        <StatusCell $w={68} $gap={11}>
          <svg width={11} height={11}><path d="M0 0h3v3H0zM4 0h3v3H4zM8 0h3v3H8zM0 4h3v3H0zM4 4h3v3H4zM8 4h3v3H8zM0 8h3v3H0zM4 8h3v3H4zM8 8h3v3H8z" fill="#bdbdbd" /></svg>
          <svg width={11} height={11}><path d="M0 0h11v7H0zM0 8h3v3H0zM4 8h3v3H4zM8 8h3v3H8z" fill="#bdbdbd" /></svg>
          <svg width={11} height={11}><path d="M0 0h11v11H0z" fill="#666" /></svg>
        </StatusCell>
      </StatusBar>
    </Window>
  );
}
